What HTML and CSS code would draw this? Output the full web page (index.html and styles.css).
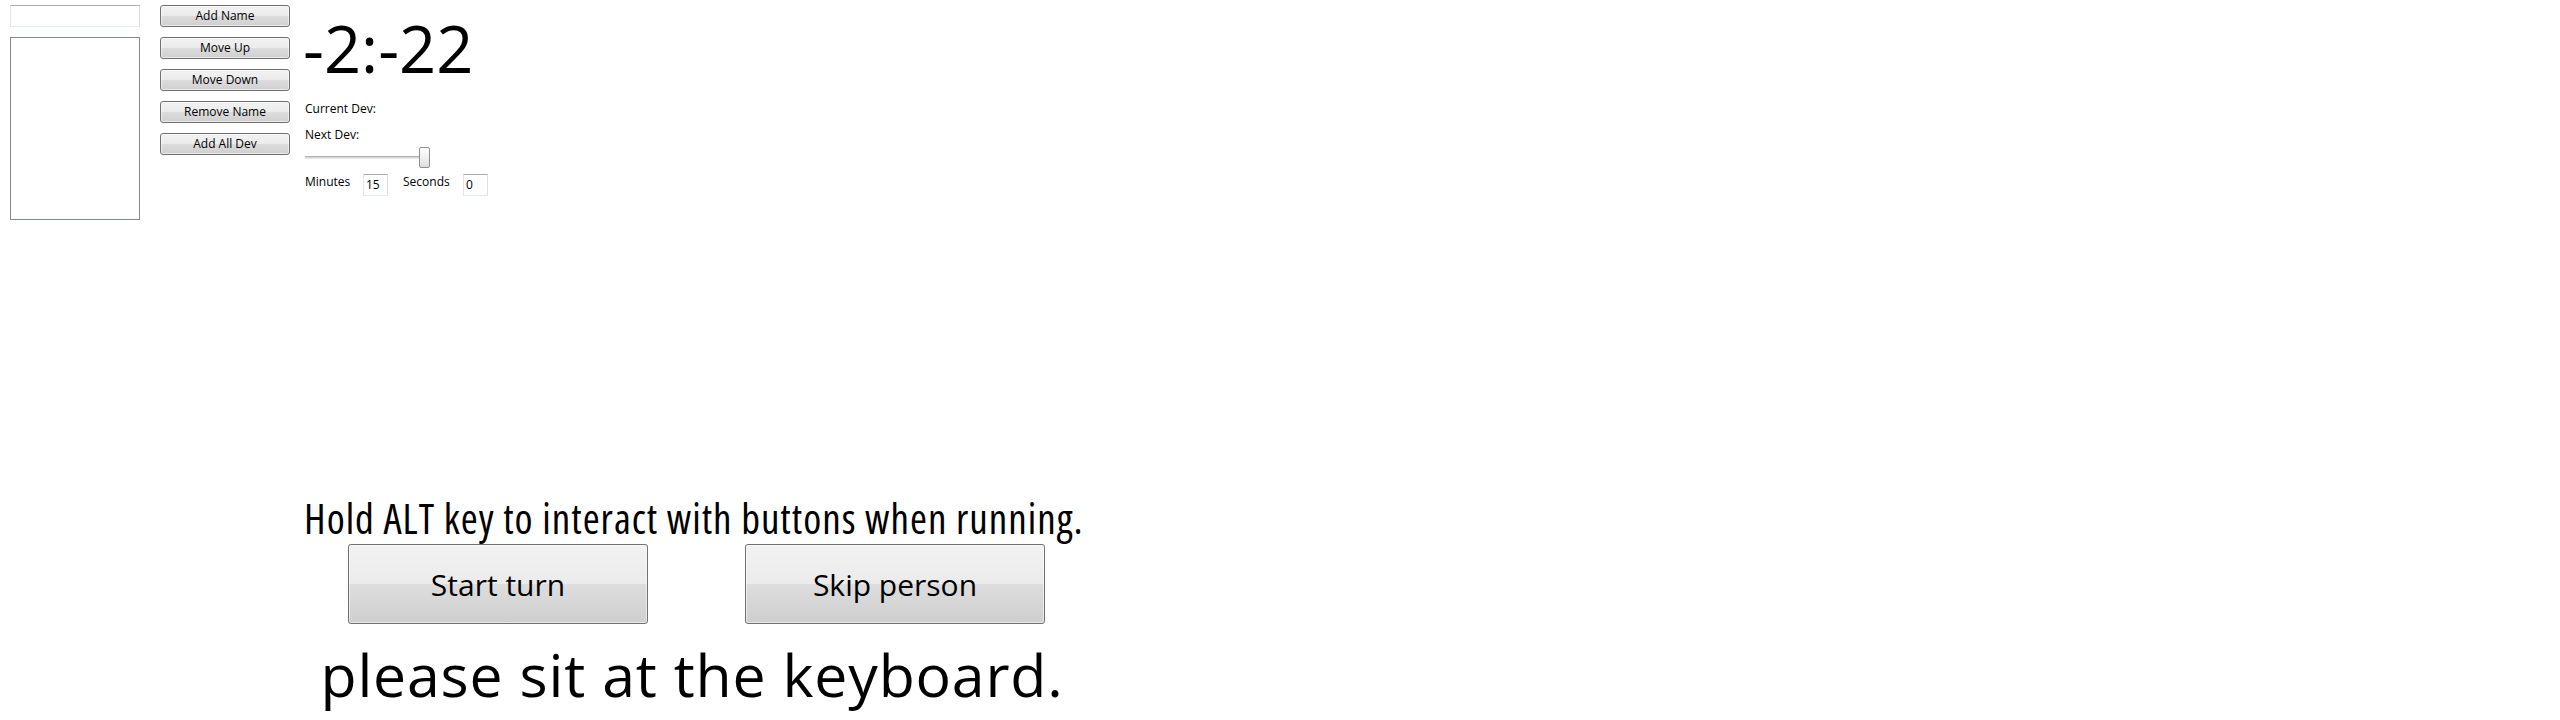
FILE: index.html
```html
<!DOCTYPE html>
<html lang="en">
<head>
<meta charset="utf-8">
<title>Mob Timer</title>
<link rel="stylesheet" href="styles.css">
</head>
<body>
<div class="window">
  <section class="top">
    <div class="names">
      <div class="textbox name-input"></div>
      <div class="listbox"></div>
    </div>
    <div class="actions">
      <button class="btn small">Add Name</button>
      <button class="btn small">Move Up</button>
      <button class="btn small">Move Down</button>
      <button class="btn small">Remove Name</button>
      <button class="btn small">Add All Dev</button>
    </div>
    <div class="status">
      <div class="timer">-2:-22</div>
      <div class="line current">Current Dev:</div>
      <div class="line">Next Dev:</div>
      <div class="slider">
        <div class="track"></div>
        <div class="thumb"></div>
      </div>
      <div class="duration">
        <span class="lbl lbl-min">Minutes</span>
        <span class="textbox num">15</span>
        <span class="lbl lbl-sec">Seconds</span>
        <span class="textbox num">0</span>
      </div>
    </div>
  </section>
  <section class="bottom">
    <p class="hint">Hold ALT key to interact with buttons when running.</p>
    <div class="turn-buttons">
      <button class="btn big">Start turn</button>
      <button class="btn big">Skip person</button>
    </div>
    <p class="message">please sit at the keyboard.</p>
  </section>
</div>
</body>
</html>
```

FILE: styles.css
```css
* { box-sizing: border-box; }

html, body {
  margin: 0;
  padding: 0;
  background: #ffffff;
}

body {
  font-family: "Open Sans", "Noto Sans", sans-serif;
  font-size: 12px;
  color: #000000;
  width: 2560px;
  height: 720px;
  overflow: hidden;
}

.top {
  display: flex;
  align-items: flex-start;
  padding: 5px 0 0 10px;
  height: 220px;
}

.names {
  width: 130px;
  display: flex;
  flex-direction: column;
  gap: 10px;
}

.textbox {
  border: 1px solid;
  border-color: #abadb3 #dbdfe6 #e3e9ef #e2e3ea;
  background: #ffffff;
  color: #000000;
}

.name-input {
  height: 22px;
}

.listbox {
  height: 183px;
  border: 1px solid #828790;
  background: #ffffff;
}

.actions {
  margin-left: 20px;
  width: 130px;
  display: flex;
  flex-direction: column;
  gap: 10px;
}

.btn {
  font-family: "Open Sans", "Noto Sans", sans-serif;
  color: #000000;
  border: 1px solid #707070;
  border-radius: 3px;
  background: linear-gradient(to bottom, #f2f2f2 0%, #ebebeb 50%, #dddddd 50%, #cfcfcf 100%);
  box-shadow: inset 0 0 0 1px rgba(255, 255, 255, 0.55);
  padding: 0;
  margin: 0;
}

.btn.small {
  height: 22px;
  width: 130px;
  font-size: 12px;
  line-height: 20px;
}

.status {
  margin-left: 15px;
  margin-top: 1px;
  display: flex;
  flex-direction: column;
}

.timer {
  font-size: 65px;
  line-height: 84px;
  height: 84px;
  margin-bottom: 9px;
  margin-left: -2px;
}

.line {
  line-height: 20px;
  height: 20px;
}

.line.current {
  height: 26px;
}

.slider {
  position: relative;
  width: 124px;
  height: 27px;
}

.slider .track {
  position: absolute;
  left: 0;
  right: 2px;
  top: 11px;
  height: 3px;
  border-top: 1px solid #b4b4b4;
  border-bottom: 1px solid #e8e8e8;
  background: #d6d6d6;
}

.slider .thumb {
  position: absolute;
  left: 114px;
  top: 2px;
  width: 11px;
  height: 21px;
  border: 1px solid #8e8f8f;
  border-radius: 2px;
  background: linear-gradient(to bottom, #ffffff 0%, #f0f0f0 50%, #dedede 100%);
}

.duration {
  display: flex;
  align-items: flex-start;
}

.lbl {
  line-height: 20px;
  height: 20px;
}

.lbl-min { width: 58px; }
.lbl-sec { width: 60px; margin-left: 15px; }

.num {
  margin-top: 2px;
  width: 25px;
  height: 22px;
  line-height: 20px;
  padding-left: 2px;
}

.bottom {
  margin: 276px 0 0 304px;
  width: 785px;
  display: flex;
  flex-direction: column;
  align-items: center;
}

.hint {
  margin: 0;
  font-size: 41px;
  font-stretch: 75%;
  letter-spacing: 1px;
  line-height: 44px;
  height: 44px;
  white-space: nowrap;
  align-self: flex-start;
}

.turn-buttons {
  display: flex;
  gap: 97px;
  margin-top: 4px;
}

.btn.big {
  width: 300px;
  height: 80px;
  font-size: 30px;
}

.message {
  margin: 14px 9px 0 0;
  font-size: 59px;
  letter-spacing: 0.8px;
  line-height: 72px;
  white-space: nowrap;
}
```
